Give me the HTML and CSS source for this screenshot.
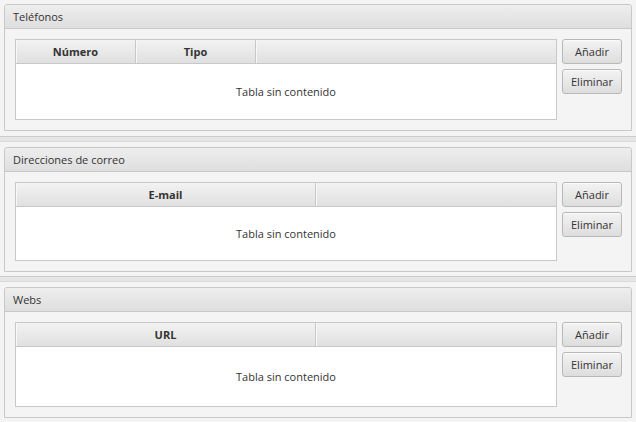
FILE: index.html
```html
<!DOCTYPE html>
<html lang="es">
<head>
<meta charset="utf-8">
<title>Contactos</title>
<link rel="stylesheet" href="styles.css">
</head>
<body>
<div class="split">
  <div class="item item1">
    <section class="pane">
      <div class="title">Teléfonos</div>
      <div class="content">
        <div class="table">
          <div class="thead">
            <div class="th w120">Número</div>
            <div class="th w120">Tipo</div>
            <div class="th fill"></div>
          </div>
          <div class="tbody">Tabla sin contenido</div>
        </div>
        <div class="buttons">
          <button class="btn">Añadir</button>
          <button class="btn">Eliminar</button>
        </div>
      </div>
    </section>
  </div>
  <div class="divider"></div>
  <div class="item item2">
    <section class="pane">
      <div class="title">Direcciones de correo</div>
      <div class="content">
        <div class="table">
          <div class="thead">
            <div class="th w300">E-mail</div>
            <div class="th fill"></div>
          </div>
          <div class="tbody">Tabla sin contenido</div>
        </div>
        <div class="buttons">
          <button class="btn">Añadir</button>
          <button class="btn">Eliminar</button>
        </div>
      </div>
    </section>
  </div>
  <div class="divider"></div>
  <div class="item item3">
    <section class="pane">
      <div class="title">Webs</div>
      <div class="content">
        <div class="table">
          <div class="thead">
            <div class="th w300">URL</div>
            <div class="th fill"></div>
          </div>
          <div class="tbody">Tabla sin contenido</div>
        </div>
        <div class="buttons">
          <button class="btn">Añadir</button>
          <button class="btn">Eliminar</button>
        </div>
      </div>
    </section>
  </div>
</div>
</body>
</html>
```

FILE: styles.css
```css
html, body {
  margin: 0;
  padding: 0;
}
body {
  width: 636px;
  height: 422px;
  overflow: hidden;
  background: #f4f4f4;
  font-family: "Open Sans", "Noto Sans", "Liberation Sans", sans-serif;
  font-size: 11px;
  color: #333333;
}
.split {
  display: flex;
  flex-direction: column;
  height: 422px;
}
.item {
  display: flex;
  flex-direction: column;
  box-sizing: border-box;
  padding: 5px 4px 4px 4px;
}
.item1 { height: 136px; padding-top: 4px; padding-bottom: 5px; }
.item2 { height: 134px; }
.item3 { height: 140px; }
.divider {
  height: 6px;
  box-sizing: border-box;
  background: #e6e6e6;
  border-top: 1px solid #cccccc;
  border-bottom: 1px solid #dadada;
}
.pane {
  flex: 1;
  display: flex;
  flex-direction: column;
  border: 1px solid #c8c8c8;
  border-radius: 3px 3px 0 0;
  background: #f4f4f4;
  min-height: 0;
}
.title {
  height: 23px;
  line-height: 23px;
  padding-left: 8px;
  border-bottom: 1px solid #c8c8c8;
  border-radius: 2px 2px 0 0;
  background: linear-gradient(#eeeeee, #dedede);
  color: #333333;
  white-space: nowrap;
}
.content {
  flex: 1;
  display: flex;
  gap: 5px;
  padding: 10px 9px 10px 10px;
  min-height: 0;
}
.table {
  flex: 1;
  display: flex;
  flex-direction: column;
  border: 1px solid #c8c8c8;
  background: #ffffff;
}
.thead {
  display: flex;
  height: 23px;
  border-bottom: 1px solid #c8c8c8;
  background: linear-gradient(#f2f2f2, #e0e0e0);
}
.th {
  box-sizing: border-box;
  line-height: 23px;
  text-align: center;
  font-weight: bold;
  color: #333333;
  border-right: 1px solid #c8c8c8;
  box-shadow: inset 1px 0 0 #f8f8f8;
}
.w120 { width: 120px; }
.w300 { width: 300px; }
.fill { flex: 1; border-right: none; }
.tbody {
  flex: 1;
  display: flex;
  align-items: center;
  justify-content: center;
  color: #333333;
}
.buttons {
  display: flex;
  flex-direction: column;
  gap: 5px;
}
.btn {
  width: 60px;
  height: 25px;
  padding: 0;
  border: 1px solid #b8b8b8;
  border-radius: 3px;
  background: linear-gradient(#f3f3f3, #dddddd);
  font-family: "Open Sans", "Noto Sans", "Liberation Sans", sans-serif;
  font-size: 11px;
  color: #333333;
  box-shadow: inset 0 1px 0 #fbfbfb;
}
```
